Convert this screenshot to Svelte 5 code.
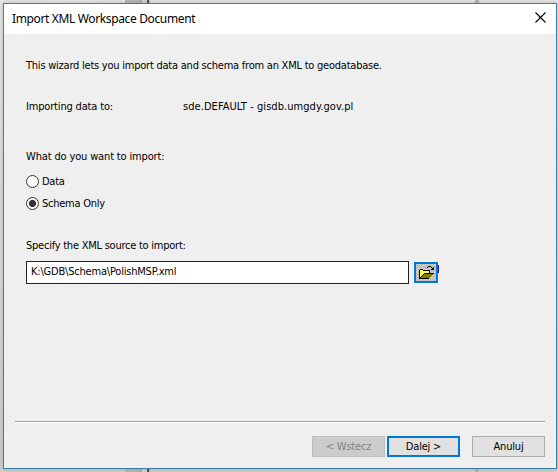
<script>
  let choice = $state('schema');
  let source = $state('K:\\GDB\\Schema\\PolishMSP.xml');
</script>

<div class="desktop">
  <div class="dialog">
    <header>
      <h1>Import XML Workspace Document</h1>
      <svg class="close" width="11" height="11" viewBox="0 0 11 11"><path d="M.5.5l10 10M10.5.5l-10 10" stroke="#000" stroke-width="1.1" /></svg>
    </header>
    <main>
      <p class="intro">This wizard lets you import data and schema from an XML to geodatabase.</p>
      <div class="target"><span class="lbl">Importing data to:</span><span class="db">sde.DEFAULT - gisdb.umgdy.gov.pl</span></div>
      <p class="question">What do you want to import:</p>
      <label class="r1"><input type="radio" value="data" bind:group={choice} /><span>Data</span></label>
      <label class="r2"><input type="radio" value="schema" bind:group={choice} /><span>Schema Only</span></label>
      <p class="specify">Specify the XML source to import:</p>
      <div class="source">
        <input class="path" type="text" bind:value={source} />
        <button class="browse" aria-label="Browse">
          <svg width="16" height="13" viewBox="0 0 16 13" shape-rendering="crispEdges">
            <path d="M0 4h1V3h3v1h7v3h4v1h-1v1h-1v1h-1v1h-1v1h-1v1H0z" fill="#000" />
            <path d="M1 4h3v1h6v2H5v1H4v1H3v1H2v1H1z" fill="#ffff3c" />
            <path d="M2 4h1v1H2zM1 5h1v1H1zM3 5h1v1H3zM5 5h1v1H5zM7 5h1v1H7zM9 5h1v1H9zM2 6h1v1H2zM4 6h1v1H4zM6 6h1v1H6zM8 6h1v1H8zM1 7h1v1H1zM3 7h1v1H3zM2 8h1v1H2zM1 9h1v1H1z" fill="#fff" />
            <path d="M5 8h9v1h-1v1h-1v1h-1v1H2v-1h1v-1h1V9h1z" fill="#808000" />
            <path d="M8 1h1V0h3v1h1v1h1V1h1v3h-3V3h1V2h-1V1H9v1H8z" fill="#000" />
          </svg>
        </button>
        <i class="edge"></i>
      </div>
    </main>
    <footer>
      <button class="back" disabled><span>&lt; Wstecz</span></button>
      <button class="next"><span>Dalej &gt;</span></button>
      <button class="cancel"><span>Anuluj</span></button>
    </footer>
  </div>
</div>

<style>
  .desktop {
    box-sizing: border-box;
    width: 558px;
    height: 472px;
    padding: 3px 1px 3px 3px;
    overflow: hidden;
    background: linear-gradient(90deg, transparent 125px, #b8b8b8 125px 140px, #aaa 140px 142px, #d5d5d5 142px 147px, #555 147px 149px, #bbb 149px 150px, transparent 150px 475px, #b8b8b8 475px 479px, transparent 479px), linear-gradient(#e6e6e6, #cfcfcf);
    font: 11px/14px "DejaVu Sans Condensed", "DejaVu Sans", sans-serif;
    font-stretch: condensed;
    letter-spacing: -.2px;
    color: #000;
  }
  .dialog {
    box-sizing: border-box;
    height: 466px;
    border: 1px solid #3c82a0;
    background: #efefef;
    box-shadow: 0 0 5px rgba(0, 0, 0, .2);
    display: flex;
    flex-direction: column;
  }
  header {
    height: 30px;
    padding: 0 10px 0 8px;
    background: #fff;
    display: flex;
    justify-content: space-between;
  }
  h1 {
    margin: 6px 0 0;
    font: 12px/18px "Noto Sans", sans-serif;
    letter-spacing: -.36px;
    white-space: nowrap;
  }
  .close { margin-top: 8px; }
  main { padding: 0 22px; flex: 1; white-space: nowrap; }
  p { margin: 0; }
  .intro { margin-top: 25px; letter-spacing: -.23px; }
  .target { display: flex; margin-top: 27px; }
  .lbl { width: 157px; letter-spacing: -.17px; }
  .db { letter-spacing: .06px; }
  .question { margin-top: 36px; letter-spacing: -.15px; }
  label { display: flex; align-items: center; height: 14px; letter-spacing: -.25px; }
  label span { padding-top: 2px; }
  .r1 { margin-top: 10px; }
  .r2 { margin-top: 8px; }
  input[type="radio"] {
    appearance: none;
    box-sizing: border-box;
    width: 13px;
    height: 13px;
    margin: 0 3px 0 0;
    border: 1px solid #333;
    border-radius: 50%;
    background: #fff;
  }
  input[type="radio"]:checked { background: radial-gradient(circle, #333 3.2px, #fff 3.9px); }
  .specify { margin-top: 29px; letter-spacing: -.24px; }
  .source { display: flex; margin-top: 8px; }
  .path {
    box-sizing: border-box;
    width: 383px;
    height: 23px;
    padding: 0 4px 3px;
    border: 1px solid #222;
    background: #fff;
    font: inherit;
    letter-spacing: -.2px;
    color: #000;
    outline: none;
  }
  button {
    box-sizing: border-box;
    padding: 1px 0 0;
    border: 1px solid #adadad;
    background: #e1e1e1;
    font: inherit;
    letter-spacing: -.2px;
    color: #000;
  }
  .browse {
    width: 24px;
    height: 21px;
    margin: 1px 0 0 5px;
    padding: 0 0 0 1px;
    border: 2px solid #0078d7;
    background: #c3c3c3;
    box-shadow: 0 0 0 1px #f9f9f9;
    display: flex;
    align-items: center;
    justify-content: center;
  }
  .edge { width: 1px; height: 8px; margin-top: 4px; background: #27209a; z-index: 1; }
  footer {
    display: flex;
    justify-content: flex-end;
    margin: 0 11px;
    height: 47px;
    padding-top: 14px;
    box-sizing: border-box;
    border-top: 1px solid #a0a0a0;
    box-shadow: inset 0 1px #fff;
  }
  footer button { width: 73px; height: 21px; }
  .back { background: #ccc; border-color: #bfbfbf; color: #838383; }
  .next { margin: 0 12px 0 2px; border: 2px solid #0078d7; }
</style>
